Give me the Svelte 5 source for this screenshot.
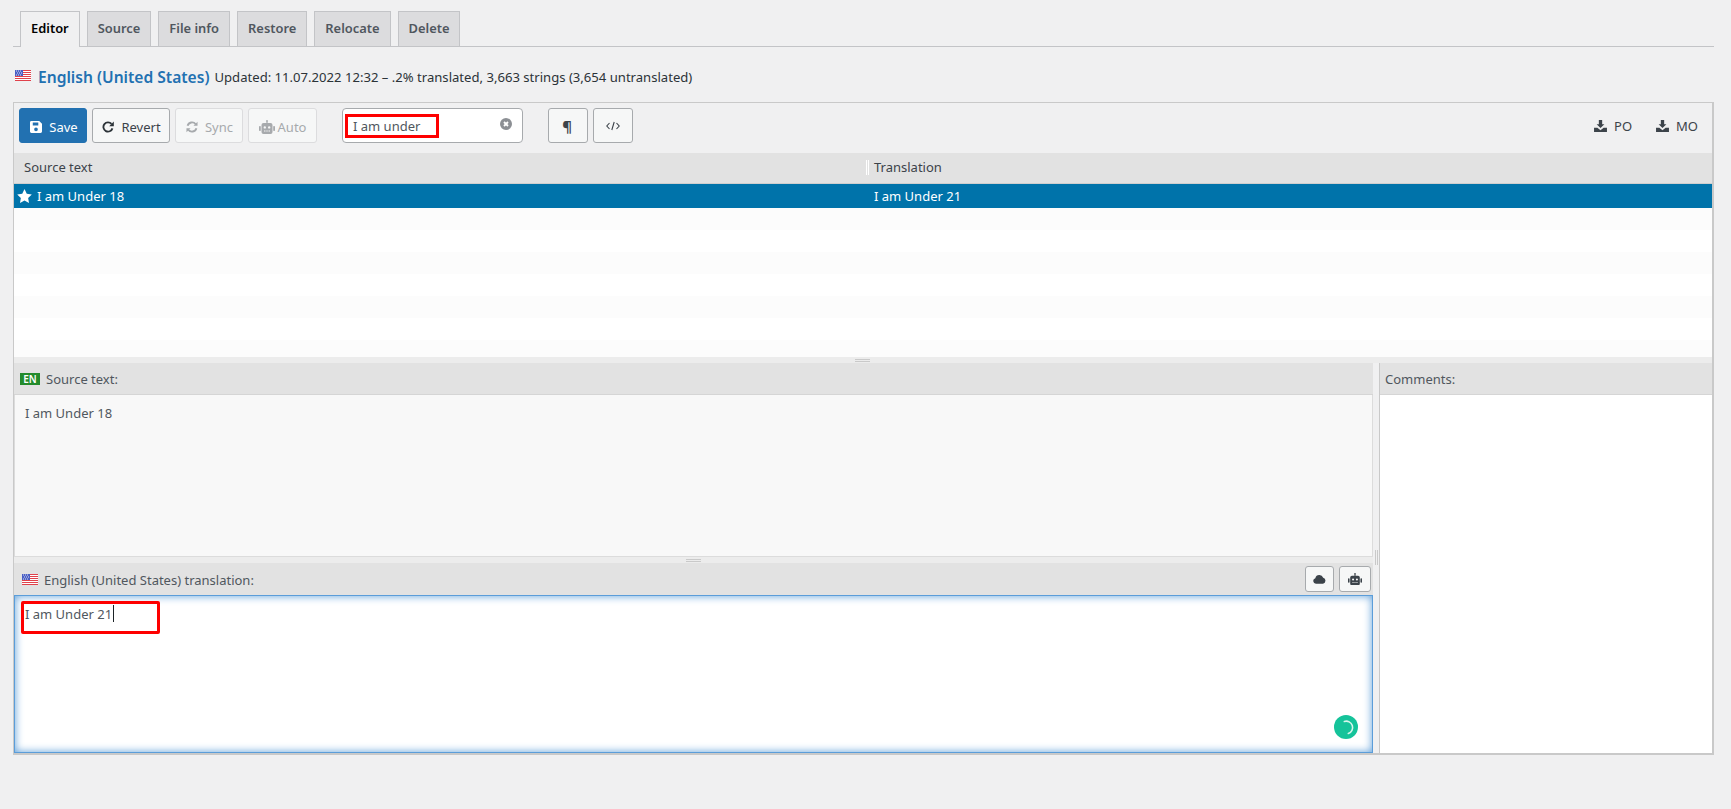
<script>
  const tabs = ['Editor', 'Source', 'File info', 'Restore', 'Relocate', 'Delete'];
  const rows = [0, 1, 2, 3, 4, 5, 6];
</script>

{#snippet flag(cls)}
  <svg class={cls} viewBox="0 0 16 11" width="16" height="11" aria-hidden="true">
    <rect width="16" height="11" fill="#fff" />
    <path d="M0 .5h16M0 2.500h16M0 4.500h16M0 6.500h16M0 8.500h16M0 10.500h16" stroke="#e0414b" stroke-width="1" />
    <rect width="8" height="6" fill="#4a5fc4" />
    <path d="M1 1h1M3 1h1M5 1h1M2 3h1M4 3h1M6 3h1M1 5h1M3 5h1M5 5h1" stroke="#fff" stroke-width=".8" />
  </svg>
{/snippet}

{#snippet robot(size, color)}
  <svg viewBox="0 0 16 14" width={size} height={size * 0.875} aria-hidden="true">
    <path fill={color} fill-rule="evenodd" d="M8 0a1 1 0 0 1 .6 1.800V3H11.500A2 2 0 0 1 13.500 5v7a2 2 0 0 1-2 2h-7a2 2 0 0 1-2-2V5a2 2 0 0 1 2-2H7.400V1.800A1 1 0 0 1 8 0zM5.800 6.200a1.200 1.200 0 1 0 0 2.400 1.200 1.200 0 0 0 0-2.400zm4.400 0a1.200 1.200 0 1 0 0 2.400 1.200 1.200 0 0 0 0-2.400zM5 10.500v1h1.500v-1zm2.300 0v1h1.400v-1zm2.200 0v1H11v-1z" />
    <rect x="0" y="6" width="1.800" height="5" rx=".8" fill={color} />
    <rect x="14.200" y="6" width="1.800" height="5" rx=".8" fill={color} />
  </svg>
{/snippet}

{#snippet download()}
  <svg viewBox="0 0 14 13" width="13" height="12" aria-hidden="true">
    <path fill="#3c434a" d="M5.200 0h3.600v4.500h2.400L7 8.600 2.800 4.500h2.400zM0 8.500h3.600L7 11l3.400-2.500H14V13H0z" />
  </svg>
{/snippet}

<div class="page">
  <nav class="tabs">
    {#each tabs as t, i}
      <span class="tab" class:active={i === 0}>{t}</span>
    {/each}
  </nav>

  <h1 class="title">
    {@render flag('flag-title')}
    <a class="lang" href="#top">English (United States)</a>
    <span class="meta">Updated: 11.07.2022 12:32 – .2% translated, 3,663 strings (3,654 untranslated)</span>
  </h1>

  <div class="editor">
    <div class="toolbar">
      <button class="btn primary">
        <svg viewBox="0 0 13 13" width="12" height="12" aria-hidden="true"><path fill="#fff" fill-rule="evenodd" d="M1.500 0H10l3 3v8.500A1.500 1.500 0 0 1 11.500 13h-10A1.500 1.500 0 0 1 0 11.500v-10A1.500 1.500 0 0 1 1.500 0zM3 1.500V5h6V1.500zM6.500 7a2 2 0 1 0 0 4 2 2 0 0 0 0-4z" /></svg>
        Save
      </button>
      <button class="btn revert">
        <svg viewBox="0 0 13 13" width="12" height="12" aria-hidden="true"><path fill="none" stroke="#2c3338" stroke-width="2" d="M10.300 3.200A5 5 0 1 0 11.300 8" /><path fill="#2c3338" d="M12.800.6v5h-5z" /></svg>
        Revert
      </button>
      <button class="btn off sync">
        <svg viewBox="0 0 13 13" width="12" height="12" aria-hidden="true"><path fill="none" stroke="#a7aaad" stroke-width="2" d="M1.700 5.200A5 5 0 0 1 10.500 3.500M11.300 7.800A5 5 0 0 1 2.500 9.500" /><path fill="#a7aaad" d="M12.500.8v4.400H8.100zM.5 12.200V7.800h4.400z" /></svg>
        Sync
      </button>
      <button class="btn off auto">
        {@render robot(16, '#a7aaad')}
        Auto
      </button>

      <div class="search">
        <span>I am under</span>
        <svg class="clear" viewBox="0 0 12 12" width="12" height="12" aria-hidden="true"><circle cx="6" cy="6" r="6" fill="#8c8f94" /><path d="M4 4l4 4M8 4l-4 4" stroke="#fff" stroke-width="1.800" /></svg>
        <i class="mark mark-search"></i>
      </div>

      <button class="btn square pil">¶</button>
      <button class="btn square code">
        <svg viewBox="0 0 14 10" width="14" height="10" aria-hidden="true"><path fill="none" stroke="#3c434a" stroke-width="1.100" d="M3.500 2 .8 5l2.700 3M10.500 2l2.700 3-2.700 3M8.200 1 5.800 9" /></svg>
      </button>

      <div class="downloads">
        <span class="dl">{@render download()}<b>PO</b></span>
        <span class="dl">{@render download()}<b>MO</b></span>
      </div>
    </div>

    <div class="thead">
      <div class="col-a">Source text</div>
      <div class="col-b"><i class="divider"></i>Translation</div>
    </div>
    <div class="selected">
      <div class="col-a">
        <svg viewBox="0 0 14 13" width="15" height="14" aria-hidden="true"><path fill="#fff" d="M7 0l2.100 4.300 4.700.7-3.400 3.300.8 4.700L7 10.800 2.800 13l.8-4.700L.2 5l4.700-.7z" /></svg>
        I am Under 18
      </div>
      <div class="col-b">I am Under 21</div>
    </div>
    <div class="list">
      {#each rows as r}
        <div class="row" class:odd={r % 2 === 0}></div>
      {/each}
    </div>
    <div class="split"><i class="grip"></i></div>

    <div class="panes">
      <div class="left">
        <div class="phead"><span class="en">EN</span>Source text:</div>
        <div class="source">I am Under 18</div>
        <div class="split"><i class="grip"></i></div>
        <div class="phead trans">
          {@render flag('flag-small')}
          <span class="grow">English (United States) translation:</span>
          <button class="btn mini">
            <svg viewBox="0 0 14 10" width="13" height="10" aria-hidden="true"><path fill="#3c434a" d="M3.200 10A3 3 0 0 1 2.500 4.100 4.500 4.500 0 0 1 11 3.600 3.300 3.300 0 0 1 10.800 10z" /></svg>
          </button>
          <button class="btn mini wide">{@render robot(14, '#3c434a')}</button>
        </div>
        <div class="target">
          <span class="typed">I am Under 21</span><i class="caret"></i>
          <i class="mark mark-target"></i>
          <span class="gram">
            <svg viewBox="0 0 24 24" width="24" height="24" aria-hidden="true"><path fill="none" stroke="#d6f5ec" stroke-width="1.600" stroke-linecap="round" d="M10.300 6.500A6 6 0 0 1 14.300 18.500" /></svg>
          </span>
        </div>
      </div>
      <div class="gutter"><i class="vgrip"></i></div>
      <div class="right">
        <div class="phead">Comments:</div>
        <div class="comments"></div>
      </div>
    </div>
  </div>
</div>

<style>
  :global(body) {
    margin: 0;
    background: #f0f0f1;
    font-family: "Noto Sans", "Open Sans", sans-serif;
    font-size: 13px;
    color: #3c434a;
  }
  .page { height: 809px; box-sizing: border-box; padding: 11px 17px 0 13px; overflow: hidden; }

  .tabs { display: flex; gap: 7px; height: 36px; padding-left: 7px; border-bottom: 1px solid #c3c4c7; box-sizing: border-box; }
  .tab { height: 35px; box-sizing: border-box; padding: 0 10px; line-height: 33px; font-weight: 600; font-size: 12.9px; color: #50575e; background: #dcdcde; border: 1px solid #c3c4c7; border-bottom: 0; }
  .tab.active { background: #f0f0f1; color: #000; height: 36px; }

  .title { display: flex; align-items: center; margin: 20px 0 0 2px; height: 20px; font-size: 13px; font-weight: 400; }
  .flag-title { margin-right: 7px; margin-top: -3px; }
  .lang { font-size: 15.6px; font-weight: 600; color: #2271b1; text-decoration: none; margin-right: 5px; }
  .meta { color: #2c3338; font-size: 13.1px; }

  .editor { margin-top: 15px; height: 653px; box-sizing: border-box; border: 1px solid #c9c9c9; border-width: 1px 2px 2px 1px; background: #f0f0f1; display: flex; flex-direction: column; }
  .toolbar { height: 50px; flex: none; display: flex; align-items: flex-start; padding: 5px 0 0 5px; box-sizing: border-box; }

  .btn { height: 35px; box-sizing: border-box; display: inline-flex; align-items: center; justify-content: center; gap: 7px; border: 1px solid #a7aaad; border-radius: 3px; background: #f6f7f7; font: inherit; color: #3c434a; padding: 2px 0 0 0; margin-right: 5px; }
  .primary { width: 68px; padding-left: 2px; background: #2271b1; border-color: #2271b1; color: #fff; }
  .revert { width: 78px; padding-left: 1px; }
  .off { color: #a7aaad; border-color: #dcdcde; }
  .sync { width: 68px; padding-left: 1px; }
  .auto { width: 69px; gap: 3px; margin-right: 25px; }
  .search { position: relative; width: 181px; height: 35px; box-sizing: border-box; border: 1px solid #a7aaad; border-radius: 4px; background: #fff; display: flex; align-items: center; justify-content: space-between; padding: 0 10px 0 10px; margin-right: 25px; color: #50575e; }
  .search .clear { margin-top: -3px; }
  .square { width: 40px; padding-top: 0; }
  .pil { font-weight: 700; font-size: 15px; padding-right: 2px; }
  .downloads { margin-left: auto; display: flex; gap: 24px; padding: 9px 14px 0 0; }
  .dl { display: inline-flex; align-items: center; gap: 7px; }
  .dl b { font-weight: 400; }

  .mark { position: absolute; display: block; border: 3px solid #fe0000; box-sizing: border-box; }
  .mark-search { left: 2px; top: 5px; width: 94px; height: 24px; }
  .mark-target { left: 6px; top: 5px; width: 139px; height: 33px; border-radius: 2px; }

  .thead { height: 31px; flex: none; box-sizing: border-box; display: flex; align-items: center; padding-bottom: 3px; background: #e2e2e2; border-bottom: 1px solid #cfcfcf; }
  .col-a { width: 852px; flex: none; padding-left: 10px; box-sizing: border-box; }
  .col-b { position: relative; padding-left: 8px; flex: 1; }
  .divider { position: absolute; left: 0; top: 2px; height: 15px; width: 1px; border-left: 1px solid #fff; border-right: 1px solid #fff; box-sizing: content-box; }

  .selected { height: 24px; flex: none; display: flex; align-items: center; background: #0073aa; color: #fff; }
  .selected .col-a { display: flex; align-items: center; gap: 5px; padding-left: 3px; }

  .list { flex: none; height: 149px; background: #fff; display: flex; flex-direction: column; overflow: hidden; }
  .row { height: 22px; flex: none; background: #fff; }
  .row.odd { background: #fcfcfc; }

  .split { height: 6px; flex: none; background: #ececec; position: relative; }
  .grip { position: absolute; left: 50%; top: 2px; width: 15px; height: 1px; margin-left: -8px; border-top: 1px solid #c9c9c9; border-bottom: 1px solid #c9c9c9; }

  .panes { flex: 1; display: flex; min-height: 0; }
  .left { width: 1359px; flex: none; display: flex; flex-direction: column; }
  .gutter { width: 6px; flex: none; position: relative; }
  .vgrip { position: absolute; left: 2px; top: 50%; margin-top: -8px; width: 1px; height: 15px; border-left: 1px solid #c9c9c9; border-right: 1px solid #c9c9c9; }
  .right { flex: 1; display: flex; flex-direction: column; border-left: 1px solid #c9c9c9; }
  .right .phead { padding-left: 5px; }

  .phead { height: 32px; flex: none; box-sizing: border-box; display: flex; align-items: center; padding: 1px 0 0 6px; background: #e2e2e2; border-bottom: 1px solid #d5d5d5; color: #50575e; }
  .en { display: inline-block; width: 20px; height: 12px; line-height: 12px; background: #238b2c; color: #fff; font-size: 10px; font-weight: 600; text-align: center; margin-right: 6px; }
  .source { height: 162px; flex: none; box-sizing: border-box; background: #f8f8f8; border-left: 1px solid #dcdcdc; border-right: 1px solid #dcdcdc; border-bottom: 1px solid #dcdcdc; padding: 9px 10px; color: #50575e; }

  .trans { padding: 0 2px 0 8px; border-bottom: 0; }
  .flag-small { margin-right: 6px; }
  .grow { flex: 1; padding-top: 1px; }
  .mini { width: 29px; height: 26px; margin: 0 0 0 5px; padding: 0; }
  .mini.wide { width: 32px; }

  .target { position: relative; flex: 1; box-sizing: border-box; background: #fff; border: 1px solid #5b9dd9; box-shadow: inset 0 0 8px #5b9dd9; padding: 9px 10px; color: #50575e; display: flex; align-items: flex-start; }
  .caret { display: block; width: 1px; height: 17px; background: #1d2327; margin-left: 1px; }
  .gram { position: absolute; right: 14px; bottom: 13px; width: 24px; height: 24px; border-radius: 50%; background: #15c39a; }
  .gram svg { display: block; }

  .comments { flex: 1; background: #fff; }
</style>
